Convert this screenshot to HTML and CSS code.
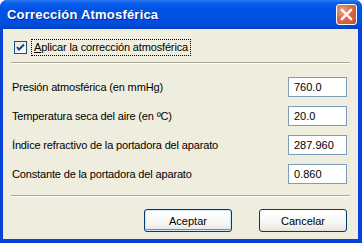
FILE: index.html
```html
<!DOCTYPE html>
<html lang="es">
<head>
    <meta charset="UTF-8">
    <title>Corrección Atmosférica</title>
    <link rel="stylesheet" href="styles.css">
</head>
<body>
    <div class="window">
        <div class="titlebar">
            <span class="title">Corrección Atmosférica</span>
            <button class="close" aria-label="Cerrar">
                <svg width="13" height="13" viewBox="0 0 13 13">
                    <path d="M2 2 L11 11 M11 2 L2 11" stroke="#fff" stroke-width="2.4" stroke-linecap="square"/>
                </svg>
            </button>
        </div>
        <div class="client">
            <label class="check-row">
                <span class="checkbox">
                    <svg width="11" height="11" viewBox="0 0 11 11">
                        <path d="M2 5 L4 7.5 L9 2.5" fill="none" stroke="#1f3c8c" stroke-width="2"/>
                    </svg>
                </span>
                <span class="check-label"><u>A</u>plicar la corrección atmosférica</span>
            </label>
            <div class="sep sep-top"></div>
            <div class="fields">
                <div class="row">
                    <span>Presión atmosférica (en mmHg)</span>
                    <input type="text" class="field" value="760.0">
                </div>
                <div class="row">
                    <span>Temperatura seca del aire (en ºC)</span>
                    <input type="text" class="field" value="20.0">
                </div>
                <div class="row">
                    <span>Índice refractivo de la portadora del aparato</span>
                    <input type="text" class="field" value="287.960">
                </div>
                <div class="row">
                    <span>Constante de la portadora del aparato</span>
                    <input type="text" class="field" value="0.860">
                </div>
            </div>
            <div class="sep sep-bottom"></div>
            <div class="actions">
                <button class="btn default">Aceptar</button>
                <button class="btn">Cancelar</button>
            </div>
        </div>
    </div>
</body>
</html>
```

FILE: styles.css
```css
body {
    margin: 0;
    font-family: 'Liberation Sans', Arial, sans-serif;
    font-size: 11px;
    letter-spacing: -0.15px;
    color: #000;
    background: #fff;
}
.window {
    width: 362px;
    height: 243px;
    display: flex;
    flex-direction: column;
    box-sizing: border-box;
    background: #0842d8;
    border-radius: 7px 7px 0 0;
    overflow: hidden;
}
.titlebar {
    height: 29px;
    flex: none;
    display: flex;
    align-items: center;
    justify-content: space-between;
    padding: 0 5px 0 7px;
    background: linear-gradient(to bottom, #2f7cf0 0px, #0a5cec 3px, #0054e6 8px, #0052e2 18px, #004cd8 25px, #0040c4 29px);
}
.title {
    color: #fff;
    font-family: 'Liberation Sans', Arial, sans-serif;
    font-weight: bold;
    font-size: 13px;
    text-shadow: 1px 1px 0 #0a2a8a;
    letter-spacing: 0.2px;
}
.close {
    width: 21px;
    height: 21px;
    padding: 0;
    border: 1px solid #fff;
    border-radius: 3px;
    background: radial-gradient(circle at 30% 30%, #e9a48a 0%, #d86a48 45%, #c4502e 100%);
    display: flex;
    align-items: center;
    justify-content: center;
}
.client {
    flex: 1;
    margin: 0 4px 4px 3px;
    background: #efedde;
    padding: 11px 8px 0 8px;
    box-sizing: border-box;
}
.check-row {
    display: flex;
    align-items: center;
    gap: 4px;
    margin-left: 3px;
    height: 14px;
}
.checkbox {
    width: 11px;
    height: 11px;
    border: 1px solid #1c5180;
    background: linear-gradient(135deg, #e6e6e0, #ffffff);
    display: flex;
}
.check-label {
    outline: 1px dotted #000;
    outline-offset: 0;
    padding: 1px 2px 2px 2px;
    margin-left: 1px;
}
.sep {
    height: 1px;
    border-top: 1px solid #aca899;
    background: #fff;
}
.sep-top {
    margin: 8px 0 13px 0;
}
.fields {
    display: flex;
    flex-direction: column;
    gap: 9px;
    padding-left: 1px;
    padding-right: 3px;
}
.row {
    display: flex;
    align-items: center;
    justify-content: space-between;
    height: 20px;
}
.field {
    width: 59px;
    height: 20px;
    box-sizing: border-box;
    border: 1px solid #7f9db9;
    background: #fff;
    font-family: 'Liberation Sans', Arial, sans-serif;
    font-size: 11px;
    padding: 0 5px;
    margin: 0;
    color: #000;
}
.sep-bottom {
    margin: 11px 0 12px 0;
}
.actions {
    display: flex;
    justify-content: flex-end;
    gap: 27px;
    padding-right: 3px;
}
.btn {
    width: 88px;
    height: 23px;
    border: 1px solid #003c74;
    border-radius: 3px;
    background: linear-gradient(to bottom, #ffffff 0%, #f7f7f4 60%, #e6e4dc 100%);
    font-family: 'Liberation Sans', Arial, sans-serif;
    font-size: 11px;
    color: #000;
    padding: 0;
}
.default {
    box-shadow: inset 0 0 0 1px #cee7ff, inset 0 -1px 0 1px #6982ee;
}
```
